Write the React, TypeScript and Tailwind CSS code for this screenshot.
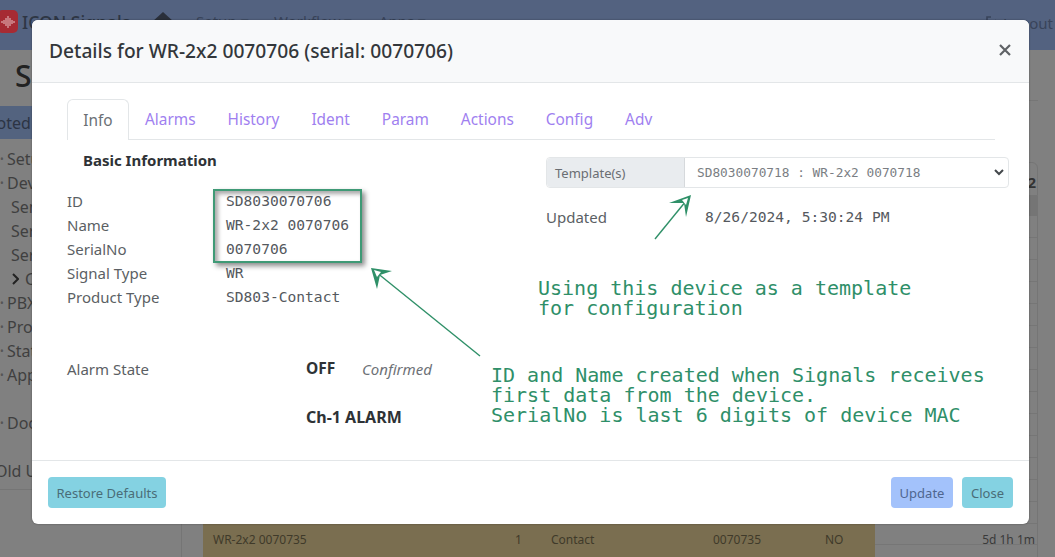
import React from "react";

const sans = "font-['Noto_Sans','Open_Sans',sans-serif]";
const mono = "font-['DejaVu_Sans_Mono',monospace]";

function Row({ label, value }: { label: string; value: string }) {
  return (
    <div className="flex h-6 items-center">
      <div className="w-[159px] text-[#5b5f64]">{label}</div>
      <div className={`${mono} text-[14.6px] text-[#55595e]`}>{value}</div>
    </div>
  );
}

function Bullet({ label }: { label: string }) {
  return (
    <div className="flex h-6 items-center">
      <span className="w-[7px] text-[#555] text-[10px]">•</span>
      <span>{label}</span>
    </div>
  );
}

function Background() {
  return (
    <div className="flex h-[557px] w-[1055px] flex-col overflow-hidden bg-[#808080]">
      <div className="flex h-[50px] shrink-0 items-start bg-[#536280] pt-[10px] text-[15px] text-[#39445a]">
        <div className="-ml-[3px] flex h-[23px] w-[21px] items-center justify-center rounded-[5px] bg-[#a62b33]">
          <svg width="14" height="12" viewBox="0 0 14 12" stroke="#e8c4c6" strokeWidth="1">
            <path d="M1 5v2M3 4v4M5 2v8M7 0v12M9 2v8M11 4v4M13 5v2" />
          </svg>
        </div>
        <div className="ml-[4px] w-[130px] text-[17.5px] leading-[24px] font-medium text-[#2e3644]">ICON Signals</div>
        <svg className="mt-[2px]" width="22" height="18" viewBox="0 0 22 18" fill="#2a2f3a"><path d="M11 0 22 10H0z" /></svg>
        <div className="ml-[22px] w-[78px]">Setup ▾</div>
        <div className="w-[105px]">Workflow ▾</div>
        <div className="w-[100px]">Apps ▾</div>
        <div className="ml-auto mr-[2px] flex items-center gap-[3px] pt-[2px] text-[15px]">
          <svg width="15" height="14" viewBox="0 0 15 14" fill="none" stroke="#39445a" strokeWidth="1.6"><path d="M6 1H2v12h4M5 7h8M10 4l3 3-3 3" /></svg>
          <span>Logout</span>
        </div>
      </div>
      <div className="flex min-h-0 flex-1">
        <div className="w-[182px] shrink-0 border-r border-[#757575] text-[16px] text-[#3f3f3f]">
          <div className="flex h-[56px] items-center pl-[15px] pb-[6px] text-[30px] font-medium text-[#222]">Sensors</div>
          <div className="flex h-[33px] items-center overflow-hidden bg-[#53637f] text-[#2c3444]"><span className="-ml-[44px]">Promoted</span></div>
          <div className="pt-[8px]">
            <Bullet label="Setup" />
            <Bullet label="Devices" />
            {["Sensors", "Servers", "Services"].map((s) => (
              <div key={s} className="flex h-6 items-center pl-[11px]">{s}</div>
            ))}
            <div className="flex h-6 items-center gap-[6px] pl-[12px]">
              <svg width="7" height="12" viewBox="0 0 7 12" fill="none" stroke="#222" strokeWidth="2"><path d="M1 1l5 5-5 5" /></svg>
              <span>Contacts</span>
            </div>
            {["PBX", "Provisioning", "Status", "Apps"].map((s) => (
              <Bullet key={s} label={s} />
            ))}
            <div className="h-[24px]" />
            <Bullet label="Documents" />
            <div className="h-[24px]" />
            <div className="flex h-6 items-center"><span className="-ml-[5px]">Old UI</span></div>
            <div className="mt-[6px] border-t border-[#757575]" />
          </div>
        </div>
        <div className="flex min-w-0 flex-1 flex-col pl-[21px] pr-[17px]">
          <div className="h-[54px] border-b border-[#767676]" />
          <div className="mt-[61px] flex h-[35px] items-center justify-end rounded-t-md border border-[#757575] pr-[1px] pt-[6px] text-[15px] font-bold text-[#333]">2</div>
          <div className="flex flex-1 flex-col border-r border-[#757575]">
            <div className="h-[20px] shrink-0 bg-[#757575]" />
            {Array.from({ length: 14 }).map((_, i) => (
              <div key={i} className="h-[22px] shrink-0 border-b border-[#767676]" />
            ))}
            <div className="flex h-[33px] shrink-0 text-[12px] text-[#3f3a2a]">
              <div className="flex w-[672px] items-start bg-[#7a6e50] pt-[7px]">
                <div className="ml-[10px] w-[302px]">WR-2x2 0070735</div>
                <div className="w-[36px]">1</div>
                <div className="w-[162px]">Contact</div>
                <div className="w-[112px]">0070735</div>
                <div>NO</div>
              </div>
              <div className="h-[21px] flex-1 border-b border-[#767676] pr-[2px] pt-[7px] text-right text-[#3a3a3a]">5d 1h 1m</div>
            </div>
          </div>
        </div>
      </div>
    </div>
  );
}

export default function App() {
  const tabs = ["Alarms", "History", "Ident", "Param", "Actions", "Config", "Adv"];
  return (
    <div className={`relative h-[557px] w-[1055px] overflow-hidden ${sans}`}>
      <Background />

      <div className="absolute left-[32px] top-[20px] flex h-[504px] w-[997px] flex-col rounded-md bg-white text-[15px] text-[#5b5f64] shadow-[0_0_2px_rgba(0,0,0,0.4)]">
        <div className="flex h-[63px] shrink-0 items-center justify-between rounded-t-md border-b border-[#e3e6e8] bg-[#f8f9fa] pl-[17px] pr-[18px]">
          <div className="text-[19.2px] font-medium text-[#33373b]">Details for WR-2x2 0070706 (serial: 0070706)</div>
          <svg width="12" height="12" viewBox="0 0 12 12" stroke="#5f6266" strokeWidth="2.2" className="mt-[-3px]">
            <path d="M1 1l10 10M11 1 1 11" />
          </svg>
        </div>

        <div className="flex min-h-0 flex-1 flex-col pl-[35px] pr-[20px] pt-4">
          <div className="mr-[14px] flex h-[41px] border-b border-[#e3e6e8] text-[15.4px]">
            <div className="flex h-[41px] w-[62px] items-center justify-center rounded-t-md border border-b-0 border-[#e3e6e8] bg-white pt-[2px] text-[#6b7075]">Info</div>
            {tabs.map((t) => (
              <div key={t} className="flex items-center px-4 pt-[2px] text-[#a07ff0]">{t}</div>
            ))}
          </div>

          <div className="flex flex-1">
            <div className="w-[479px] shrink-0">
              <div className="ml-4 mt-[9px] h-[27px] text-[15px] font-bold text-[#2e3236]">Basic Information</div>
              <div className="mt-[13px]">
                <Row label="ID" value="SD8030070706" />
                <Row label="Name" value="WR-2x2 0070706" />
                <Row label="SerialNo" value="0070706" />
                <Row label="Signal Type" value="WR" />
                <Row label="Product Type" value="SD803-Contact" />
              </div>
              <div className="mt-[48px] flex h-6 items-center">
                <div className="w-[239px]">Alarm State</div>
                <div className="w-[56px] text-[15.5px] font-bold text-[#2e3236]">OFF</div>
                <div className="italic text-[#6d7176]">Confirmed</div>
              </div>
              <div className="ml-[239px] mt-6 flex h-6 items-center text-[16px] font-bold text-[#2e3236]">Ch-1 ALARM</div>
            </div>

            <div className="flex-1">
              <div className="mt-[17px] flex h-[31px] rounded border border-[#e3e6e8] text-[13px]">
                <div className="flex w-[138px] items-center rounded-l border-r border-[#d6d9dc] bg-[#e9ecef] pl-[8px] pt-[2px] text-[#6a6e73]">Template(s)</div>
                <div className={`${mono} flex flex-1 items-center justify-between pl-[12px] pr-[4px] text-[12.8px] text-[#7a7e83]`}>
                  <span>SD8030070718 : WR-2x2 0070718</span>
                  <svg width="10" height="7" viewBox="0 0 10 7" fill="none" stroke="#44484c" strokeWidth="2"><path d="M1 1l4 4 4-4" /></svg>
                </div>
              </div>
              <div className="mt-[17px] flex h-6 items-center">
                <div className="w-[159px]">Updated</div>
                <div className={`${mono} text-[14.6px] text-[#55595e]`}>8/26/2024, 5:30:24 PM</div>
              </div>
            </div>
          </div>
        </div>

        <div className="flex h-[64px] shrink-0 items-center justify-between border-t border-[#e3e6e8] pl-4 pr-4 text-[13px]">
          <div className="flex h-[31px] w-[118px] items-center justify-center rounded bg-[#84d2e2] pt-[2px] text-[#4a6d78]">Restore Defaults</div>
          <div className="flex gap-[9px]">
            <div className="flex h-[31px] w-[62px] items-center justify-center rounded bg-[#a3c2fb] pt-[2px] text-[#4f6690]">Update</div>
            <div className="flex h-[31px] w-[51px] items-center justify-center rounded bg-[#84d2e2] pt-[2px] text-[#4a6d78]">Close</div>
          </div>
        </div>
      </div>

      <div className="absolute left-[213px] top-[189px] h-[74px] w-[149px] border-2 border-[#3f9a76] shadow-[3px_3px_5px_rgba(0,0,0,0.45),inset_3px_3px_4px_rgba(0,0,0,0.35)]" />

      <svg className="absolute left-0 top-0" width="1055" height="557" fill="none" stroke="#2f9068" strokeWidth="1.4">
        <path d="M480 356 376 272" />
        <path d="M392 271 371 268 377 289 380 275Z" fill="#2f9068" stroke="none" />
        <path d="M374 270 381 272 377 277Z" fill="#fff" stroke="none" />
        <path d="M655 239 686 201" />
        <path d="M669 203 691 195 686 217 684 203Z" fill="#2f9068" stroke="none" />
        <path d="M688 198 682 200 686 205Z" fill="#fff" stroke="none" />
      </svg>

      <div className={`absolute left-[538px] top-[278px] whitespace-pre ${mono} text-[20px] leading-[20px] text-[#2f8f69]`}>{"Using this device as a template\nfor configuration"}</div>
      <div className={`absolute left-[491px] top-[365px] whitespace-pre ${mono} text-[20px] leading-[20px] text-[#2f8f69]`}>{"ID and Name created when Signals receives\nfirst data from the device.\nSerialNo is last 6 digits of device MAC"}</div>
    </div>
  );
}
